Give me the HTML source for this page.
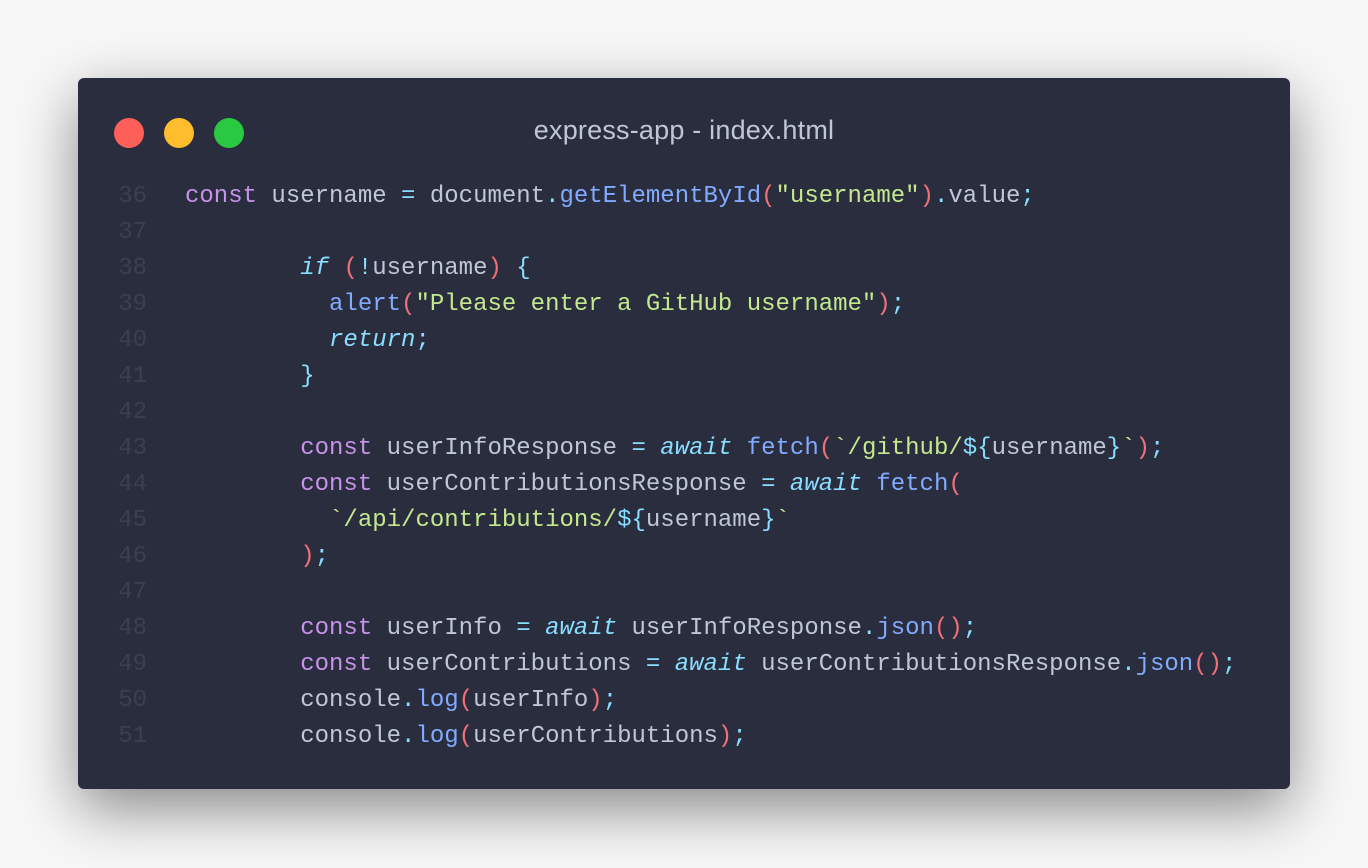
<!DOCTYPE html>
<html><head><meta charset="utf-8"><style>
html,body{margin:0;padding:0;width:1368px;height:868px;background:#f7f7f7;overflow:hidden}
.win{position:absolute;left:78px;top:78px;width:1212px;height:711px;background:#292d3e;border-radius:6px;box-shadow:0 20px 60px rgba(0,0,0,0.45)}
.dot{position:absolute;top:40px;width:30px;height:30px;border-radius:50%}
.title{position:absolute;left:0;right:0;top:37px;text-align:center;color:#bfc7d5;font:27px "Liberation Sans",sans-serif;letter-spacing:0.2px}
.code{position:absolute;left:40px;top:101px;font:24px/36px "Liberation Mono",monospace;color:#bfc7d5;white-space:pre}
.ln{display:inline-block;width:29px;text-align:right;color:#3a4052;margin-right:38px}
.k{color:#c792ea}.o{color:#89ddff}.f{color:#82aaff}.s{color:#c3e88d}.p{color:#f07178}.i{color:#89ddff;font-style:italic}
</style></head><body>
<div class="win">
<div class="dot" style="left:36px;background:#ff5f59"></div>
<div class="dot" style="left:86px;background:#ffbd2e"></div>
<div class="dot" style="left:136px;background:#29c941"></div>
<div class="title">express-app - index.html</div>
<div class="code"><span class="ln">36</span><span class="k">const</span> username <span class="o">=</span> document<span class="o">.</span><span class="f">getElementById</span><span class="p">(</span><span class="s">"username"</span><span class="p">)</span><span class="o">.</span>value<span class="o">;</span>
<span class="ln">37</span>
<span class="ln">38</span>        <span class="i">if</span> <span class="p">(</span><span class="o">!</span>username<span class="p">)</span> <span class="o">{</span>
<span class="ln">39</span>          <span class="f">alert</span><span class="p">(</span><span class="s">"Please enter a GitHub username"</span><span class="p">)</span><span class="o">;</span>
<span class="ln">40</span>          <span class="i">return</span><span class="o">;</span>
<span class="ln">41</span>        <span class="o">}</span>
<span class="ln">42</span>
<span class="ln">43</span>        <span class="k">const</span> userInfoResponse <span class="o">=</span> <span class="i">await</span> <span class="f">fetch</span><span class="p">(</span><span class="s">`/github/</span><span class="o">${</span>username<span class="o">}</span><span class="s">`</span><span class="p">)</span><span class="o">;</span>
<span class="ln">44</span>        <span class="k">const</span> userContributionsResponse <span class="o">=</span> <span class="i">await</span> <span class="f">fetch</span><span class="p">(</span>
<span class="ln">45</span>          <span class="s">`/api/contributions/</span><span class="o">${</span>username<span class="o">}</span><span class="s">`</span>
<span class="ln">46</span>        <span class="p">)</span><span class="o">;</span>
<span class="ln">47</span>
<span class="ln">48</span>        <span class="k">const</span> userInfo <span class="o">=</span> <span class="i">await</span> userInfoResponse<span class="o">.</span><span class="f">json</span><span class="p">()</span><span class="o">;</span>
<span class="ln">49</span>        <span class="k">const</span> userContributions <span class="o">=</span> <span class="i">await</span> userContributionsResponse<span class="o">.</span><span class="f">json</span><span class="p">()</span><span class="o">;</span>
<span class="ln">50</span>        console<span class="o">.</span><span class="f">log</span><span class="p">(</span>userInfo<span class="p">)</span><span class="o">;</span>
<span class="ln">51</span>        console<span class="o">.</span><span class="f">log</span><span class="p">(</span>userContributions<span class="p">)</span><span class="o">;</span></div>
</div>
</body></html>
